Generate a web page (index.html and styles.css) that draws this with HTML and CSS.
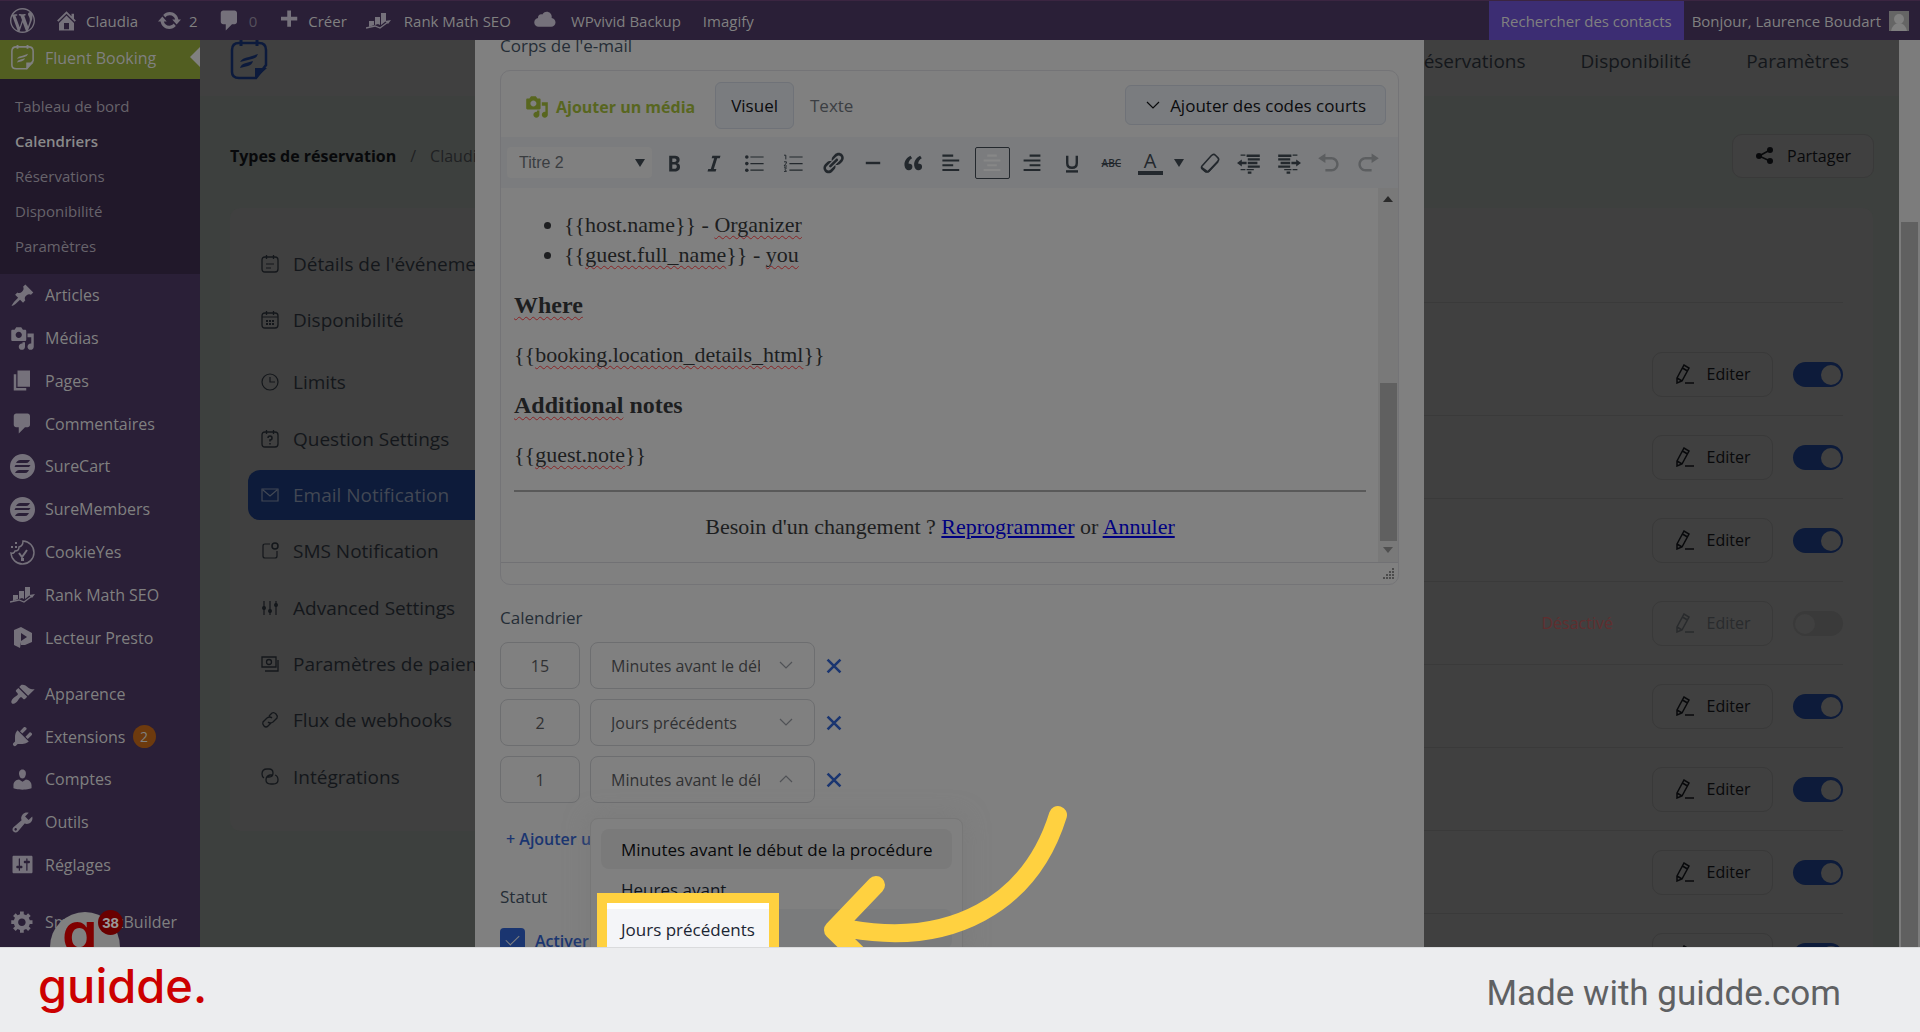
FILE: index.html
```html
<!DOCTYPE html>
<html lang="fr">
<head>
    <meta charset="UTF-8">
    <meta name="viewport" content="width=device-width, initial-scale=1.0">
    <title>Fluent Booking - Calendriers</title>
    <link rel="stylesheet" href="styles.css">
</head>
<body>
    <!-- Shared icons -->
    <svg class="sprite" aria-hidden="true">
        <symbol id="i-media" viewBox="0 0 20 20"><path d="M13 11V4c0-.55-.45-1-1-1h-1.67L9 1H5L3.67 3H2c-.55 0-1 .45-1 1v7c0 .55.45 1 1 1h10c.55 0 1-.45 1-1zM7 4.5c1.38 0 2.5 1.12 2.5 2.5S8.38 9.5 7 9.5 4.5 8.38 4.5 7 5.62 4.5 7 4.5zM14 6h5v10.5c0 1.38-1.12 2.5-2.5 2.5S14 17.88 14 16.5s1.12-2.5 2.5-2.5c.17 0 .34.02.5.05V9h-3V6zm-4 8.05V13h2v3.5c0 1.38-1.12 2.5-2.5 2.5S7 17.88 7 16.5 8.12 14 9.5 14c.17 0 .34.02.5.05z"/></symbol>
        <symbol id="i-comment" viewBox="0 0 20 20"><path d="M5 2h9c1.1 0 2 .9 2 2v7c0 1.1-.9 2-2 2h-2l-5 5v-5H5c-1.1 0-2-.9-2-2V4c0-1.1.9-2 2-2z"/></symbol>
        <symbol id="i-rank" viewBox="0 0 25 25"><path d="M3 13h5v4l-5 2zM9 9h5v8l-2-1-3 1zM15 5h5v8l-5 4z"/><path d="M0 20l9-2 5 2 8-6" fill="none" stroke="currentColor" stroke-width="1.3"/><path d="M19 13l6-1-3 4z"/></symbol>
        <symbol id="i-sure" viewBox="0 0 25 25"><path fill-rule="evenodd" d="M12.5 0a12.5 12.5 0 1 0 0 25a12.5 12.5 0 1 0 0-25zM10 6h10l-1 1.5q-1 1.5-3 1.5H6l1-1.5q1-1.5 3-1.5zM5.5 11h15l-1 1.5q-.5.5-1.5.5H4.5zM9 16h10l-1 1.5q-1 1.5-3 1.5H5l1-1.5q1-1.5 3-1.5z"/></symbol>
        <symbol id="i-booking" viewBox="0 0 38 40"><path d="M36 25V10q0-7-7-7H9q-7 0-7 7v22q0 6 7 6h17z" fill="none" stroke="currentColor" stroke-width="2.5"/><path d="M11 0v6M27 0v6" stroke="currentColor" stroke-width="3"/><path d="M25 39V28h12zM10 22q2-4 9-5l9-3q-1 4-6 5l-8 2zM10 28q1-4 6-5l7-2q-1 4-5 5z"/></symbol>
        <symbol id="i-chevron" viewBox="0 0 16 16"><path d="M2 5l6 6 6-6" fill="none" stroke="currentColor" stroke-width="1.2"/></symbol>
        <symbol id="i-edit" viewBox="0 0 20 20"><path d="M2 14L9 1l5 3-7 13-5 2zM2 14l5 3M7.5 4l5 3M10 19h9" fill="none" stroke="currentColor" stroke-width="1.5"/></symbol>
        <symbol id="i-cal" viewBox="0 0 18 18"><path d="M4 2h10q3 0 3 3v9q0 3-3 3H4q-3 0-3-3V5q0-3 3-3zM5.5 0v4M12.5 0v4" fill="none" stroke="currentColor" stroke-width="1.3"/></symbol>
        <symbol id="i-cross" viewBox="0 0 14 14"><path d="M2 2l10 10M12 2L2 12" stroke="currentColor" stroke-width="2"/></symbol>
        <symbol id="i-caret" viewBox="0 0 10 8"><path d="M0 0h10L5 8z"/></symbol>
    </svg>

    <div class="stage">
        <!-- Admin bar -->
        <header class="adminbar">
            <a href="#" class="bar-item" aria-label="WordPress"><svg class="icon" viewBox="0 0 20 20"><path d="M20 10c0-5.51-4.49-10-10-10C4.48 0 0 4.49 0 10c0 5.52 4.48 10 10 10 5.51 0 10-4.48 10-10zM7.78 15.37L4.37 6.22c.55-.02 1.17-.08 1.17-.08.5-.06.44-1.13-.06-1.11 0 0-1.45.11-2.37.11-.18 0-.37 0-.58-.01C4.12 2.69 6.87 1.11 10 1.11c2.33 0 4.45.87 6.05 2.34-.68-.11-1.65.39-1.65 1.58 0 .74.45 1.36.9 2.1.35.61.55 1.36.55 2.46 0 1.49-1.4 5-1.4 5l-3.03-8.37c.54-.02.82-.17.82-.17.5-.05.44-1.25-.06-1.22 0 0-1.44.12-2.38.12-.87 0-2.33-.12-2.33-.12-.5-.03-.56 1.2-.06 1.22l.92.08 1.26 3.41zM17.41 10c.24-.64.74-1.87.43-4.25.7 1.29 1.05 2.71 1.05 4.25 0 3.29-1.73 6.24-4.4 7.78.97-2.59 1.94-5.2 2.92-7.78zM6.1 18.09C3.12 16.65 1.11 13.53 1.11 10c0-1.3.23-2.48.72-3.59C3.25 10.3 4.67 14.2 6.1 18.09zm4.03-6.63l2.58 6.98c-.86.29-1.76.45-2.71.45-.79 0-1.57-.11-2.29-.33.81-2.38 1.62-4.74 2.42-7.1z"/></svg></a>
            <a href="#" class="bar-item"><svg class="icon" viewBox="0 0 20 20"><path d="M16 8.5l1.53 1.53-1.06 1.06L10 4.6l-6.47 6.49-1.06-1.06L10 2.5l4 4v-2h2v4zm-6-2.46l6 5.99V18H4v-5.97zM12 17v-5H8v5h4z"/></svg>Claudia</a>
            <a href="#" class="bar-item"><svg class="icon" viewBox="0 0 20 20"><path d="M10.2 3.28c3.53 0 6.43 2.61 6.92 6h2.08l-3.5 4-3.5-4h2.32c-.45-1.97-2.21-3.45-4.32-3.45-1.45 0-2.73.71-3.54 1.78L4.95 5.66C6.23 4.2 8.11 3.28 10.2 3.28zm-.4 13.44c-3.52 0-6.43-2.61-6.92-6H.8l3.5-4c1.17 1.33 2.33 2.67 3.5 4H5.48c.45 1.97 2.21 3.45 4.32 3.45 1.45 0 2.73-.71 3.54-1.78l1.71 1.95c-1.28 1.46-3.15 2.38-5.25 2.38z"/></svg>2</a>
            <a href="#" class="bar-item muted"><svg class="icon" viewBox="0 0 20 20"><use href="#i-comment"/></svg>0</a>
            <a href="#" class="bar-item"><svg class="icon" viewBox="0 0 20 20"><path d="M17 7v3h-5v5H9v-5H4V7h5V2h3v5h5z"/></svg>Créer</a>
            <a href="#" class="bar-item wide"><svg class="icon"><use href="#i-rank"/></svg>Rank Math SEO</a>
            <a href="#" class="bar-item wide"><svg class="icon" viewBox="0 1 20 20"><path d="M14.9 9c1.8.2 3.1 1.7 3.1 3.5 0 1.9-1.6 3.5-3.5 3.5h-10C2.6 16 1 14.4 1 12.5 1 10.7 2.3 9.3 4.1 9 4 8.9 4 8.7 4 8.5 4 7.1 5.1 6 6.5 6c.3 0 .7.1.9.2C8.1 4.9 9.4 4 11 4c2.2 0 4 1.8 4 4 0 .4-.1.7-.1 1z"/></svg>WPvivid Backup</a>
            <a href="#" class="bar-item last">Imagify</a>
            <a href="#" class="bar-search">Rechercher des contacts</a>
            <a href="#" class="bar-user">Bonjour, Laurence Boudart
                <svg class="avatar" viewBox="0 0 20 20"><rect width="20" height="20" fill="#656565"/><circle cx="10" cy="8" r="5" fill="#808080"/><path d="M2 20q2-8 8-8t8 8z" fill="#808080"/></svg>
            </a>
        </header>

        <div class="viewport">
            <!-- Side menu -->
            <nav class="sidebar">
                <a href="#" class="menu-item current"><svg class="icon"><use href="#i-booking"/></svg>Fluent Booking</a>
                <div class="submenu">
                    <a href="#">Tableau de bord</a>
                    <a href="#" class="active">Calendriers</a>
                    <a href="#">Réservations</a>
                    <a href="#">Disponibilité</a>
                    <a href="#">Paramètres</a>
                </div>
                <div class="menu-group content-group">
                    <a href="#" class="menu-item"><svg class="icon" viewBox="0 0 20 20"><path d="M10.44 3.02l1.82-1.82 6.36 6.35-1.83 1.82c-1.05-.68-2.48-.57-3.41.36l-.75.75c-.92.93-1.04 2.35-.35 3.41l-1.83 1.82-2.41-2.41-2.8 2.79c-.42.42-3.38 2.71-3.8 2.29s1.86-3.39 2.28-3.81l2.79-2.79L4.1 9.36l1.83-1.82c1.05.69 2.48.57 3.4-.36l.75-.75c.93-.92 1.05-2.35.36-3.41z"/></svg>Articles</a>
                    <a href="#" class="menu-item"><svg class="icon"><use href="#i-media"/></svg>Médias</a>
                    <a href="#" class="menu-item"><svg class="icon" viewBox="0 0 20 20"><path d="M6 15V2h10v13H6zm-1 1h8v2H3V5h2v11z"/></svg>Pages</a>
                    <a href="#" class="menu-item"><svg class="icon"><use href="#i-comment"/></svg>Commentaires</a>
                    <a href="#" class="menu-item"><svg class="icon"><use href="#i-sure"/></svg>SureCart</a>
                    <a href="#" class="menu-item"><svg class="icon"><use href="#i-sure"/></svg>SureMembers</a>
                    <a href="#" class="menu-item"><svg class="icon" viewBox="0 0 25 25"><path d="M13 1a11.5 11.5 0 1 1-12 12q3 1 4-2 4 0 4-4 4-1 4-6z" fill="none" stroke="currentColor" stroke-width="1.5"/><path d="M9 13l3 4 5-7" fill="none" stroke="currentColor" stroke-width="2"/><path d="M5 2h2v2H5zM1 6h2v2H1zM5 6h2v2H5zM11 18h3v3h-3z"/></svg>CookieYes</a>
                    <a href="#" class="menu-item"><svg class="icon"><use href="#i-rank"/></svg>Rank Math SEO</a>
                    <a href="#" class="menu-item"><svg class="icon" viewBox="0 0 25 25"><path fill-rule="evenodd" d="M4 5l7-3 11 6v9l-7 3h-4v-3l-1 6-6-3zM11 8v8l6-4z"/></svg>Lecteur Presto</a>
                </div>
                <div class="menu-group system-group">
                    <a href="#" class="menu-item"><svg class="icon" viewBox="0 0 20 20"><path d="M14.48 11.06L7.41 3.99l1.5-1.5c.5-.56 2.3-.47 3.51.32 1.21.8 1.43 1.28 2.91 2.1 1.18.64 2.45 1.26 4.45.85zm-.71.71L6.7 4.7 4.93 6.47c-.39.39-.39 1.02 0 1.41l1.06 1.06c.39.39.39 1.03 0 1.42-.6.6-1.43 1.11-2.21 1.69-.35.26-.7.53-1.01.84C1.43 14.23.4 16.08 1.4 17.07c.99 1 2.84-.03 4.18-1.36.31-.31.58-.66.85-1.02.57-.78 1.08-1.61 1.69-2.21.39-.39 1.02-.39 1.41 0l1.06 1.06c.39.39 1.02.39 1.41 0z"/></svg>Apparence</a>
                    <a href="#" class="menu-item"><svg class="icon" viewBox="0 0 20 20"><path d="M13.11 4.36L9.87 7.6 8 5.73l3.24-3.24c.35-.34 1.05-.2 1.56.32.52.51.66 1.21.31 1.55zm-8 1.77l.91-1.12 9.01 9.01-1.19.84c-.71.71-2.63 1.16-3.82 1.16H6.14L4.9 17.26c-.59.59-1.54.59-2.12 0-.59-.58-.59-1.53 0-2.12l1.24-1.24v-3.88c0-1.13.4-3.19 1.09-3.89zm7.26 3.97l3.24-3.24c.34-.35 1.04-.21 1.55.31.52.51.66 1.21.31 1.55l-3.24 3.25z"/></svg>Extensions <span class="count">2</span></a>
                    <a href="#" class="menu-item"><svg class="icon" viewBox="0 0 20 20"><path d="M10 9.25c-2.27 0-2.73-3.44-2.73-3.44C7 4.02 7.82 2 9.97 2c2.16 0 2.98 2.02 2.71 3.81 0 0-.41 3.44-2.68 3.44zm0 2.57L12.72 10c2.39 0 4.52 2.33 4.52 4.53v2.49s-3.65 1.13-7.24 1.13c-3.65 0-7.24-1.13-7.24-1.13v-2.49c0-2.25 1.94-4.48 4.47-4.48z"/></svg>Comptes</a>
                    <a href="#" class="menu-item"><svg class="icon" viewBox="0 0 20 20"><path d="M16.68 9.77c-1.34 1.34-3.3 1.67-4.95.99l-5.41 6.52c-.99.99-2.59.99-3.58 0s-.99-2.59 0-3.57l6.52-5.42c-.68-1.65-.35-3.61.99-4.95 1.28-1.28 3.12-1.62 4.72-1.06l-2.89 2.89 2.82 2.82 2.86-2.87c.53 1.58.18 3.39-1.08 4.65zM3.81 16.21c.4.39 1.04.39 1.43 0 .4-.4.4-1.04 0-1.43-.39-.4-1.03-.4-1.43 0-.39.39-.39 1.03 0 1.43z"/></svg>Outils</a>
                    <a href="#" class="menu-item"><svg class="icon" viewBox="0 0 20 20"><path d="M18 16V4c0-.55-.45-1-1-1H3c-.55 0-1 .45-1 1v12c0 .55.45 1 1 1h14c.55 0 1-.45 1-1zM8 11h1c.55 0 1 .45 1 1s-.45 1-1 1H8v1.5c0 .28-.22.5-.5.5s-.5-.22-.5-.5V13H6c-.55 0-1-.45-1-1s.45-1 1-1h1V5.5c0-.28.22-.5.5-.5s.5.22.5.5V11zm5-2h-1c-.55 0-1-.45-1-1s.45-1 1-1h1V5.5c0-.28.22-.5.5-.5s.5.22.5.5V7h1c.55 0 1 .45 1 1s-.45 1-1 1h-1v5.5c0 .28-.22.5-.5.5s-.5-.22-.5-.5V9z"/></svg>Réglages</a>
                </div>
                <a href="#" class="menu-item"><svg class="icon" viewBox="0 0 20 20"><path d="M18 12h-2.18c-.17.7-.44 1.35-.81 1.93l1.54 1.54-2.1 2.1-1.54-1.54c-.58.36-1.23.63-1.91.79V19H8v-2.18c-.68-.16-1.33-.43-1.91-.79l-1.54 1.54-2.12-2.12 1.54-1.54c-.36-.58-.63-1.23-.79-1.91H1V9.03h2.17c.16-.7.44-1.35.8-1.94L2.43 5.55l2.1-2.1 1.54 1.54c.58-.37 1.24-.64 1.93-.81V2h3v2.18c.68.16 1.33.43 1.91.79l1.54-1.54 2.12 2.12-1.54 1.54c.36.59.64 1.24.8 1.94H18V12zm-8.5 1.5c1.66 0 3-1.34 3-3s-1.34-3-3-3-3 1.34-3 3 1.34 3 3 3z"/></svg>SmartQuizBuilder</a>
            </nav>

            <!-- Page behind the dialog -->
            <main class="page">
                <div class="page-header">
                    <svg class="logo"><use href="#i-booking"/></svg>
                    <nav class="top-nav">
                        <a href="#">Réservations</a>
                        <a href="#">Disponibilité</a>
                        <a href="#">Paramètres</a>
                    </nav>
                </div>
                <div class="crumb-row">
                    <p class="crumbs"><b>Types de réservation</b><span>/</span><a href="#">Claudia</a></p>
                    <button type="button" class="outline-btn share"><svg class="btn-icon" viewBox="0 0 20 20"><circle cx="4" cy="10" r="3"/><circle cx="15" cy="4" r="3"/><circle cx="15" cy="15" r="3"/><path d="M15 4L4 10l11 5" fill="none" stroke="currentColor" stroke-width="1.5"/></svg>Partager</button>
                </div>
                <div class="columns">
                    <nav class="settings-nav">
                        <div class="nav-group">
                            <a href="#"><svg class="nav-icon" viewBox="0 0 18 18"><use href="#i-cal"/><path d="M5 9h8M5 13h5" stroke="currentColor"/></svg>Détails de l'événement</a>
                            <a href="#"><svg class="nav-icon" viewBox="0 0 18 18"><use href="#i-cal"/><path d="M1 6h16" stroke="currentColor"/><path d="M5 10h8M5 13h8" stroke="currentColor" stroke-width="2" stroke-dasharray="2 1"/></svg>Disponibilité</a>
                        </div>
                        <div class="nav-group long">
                            <a href="#"><svg class="nav-icon" viewBox="0 0 18 18"><path d="M9 1a8 8 0 1 0 0 16A8 8 0 1 0 9 1zM9 4v5h5" fill="none" stroke="currentColor" stroke-width="1.2"/></svg>Limits</a>
                            <a href="#"><svg class="nav-icon" viewBox="0 0 18 18"><use href="#i-cal"/><path d="M7 8q0-2 2-2t2 2-2 2v1.5M9 13v1.5" fill="none" stroke="currentColor" stroke-width="1.5"/></svg>Question Settings</a>
                            <a href="#" class="active"><svg class="nav-icon" viewBox="0 0 18 18"><path d="M1 3h16v12H1zM2 4l7 6 7-6" fill="none" stroke="currentColor" stroke-width="1.2"/></svg>Email Notification</a>
                            <a href="#"><svg class="nav-icon" viewBox="0 0 18 18"><path d="M9 2H4Q2 2 2 4v10q0 2 2 2h10q2 0 2-2V9" fill="none" stroke="currentColor" stroke-width="1.2"/><circle cx="14" cy="4" r="3" fill="none" stroke="currentColor" stroke-width="1.5"/></svg>SMS Notification</a>
                            <a href="#"><svg class="nav-icon" viewBox="0 0 18 18"><path d="M3 2v14M9 2v14M15 2v14" stroke="currentColor" stroke-width="1.2"/><circle cx="3" cy="9" r="2"/><circle cx="9" cy="12" r="2"/><circle cx="15" cy="6" r="2"/></svg>Advanced Settings</a>
                            <a href="#"><svg class="nav-icon" viewBox="0 0 18 18"><path d="M1 2h14v10H1zM17 5v11H4" fill="none" stroke="currentColor" stroke-width="1.3"/><circle cx="8" cy="7" r="2.5" fill="none" stroke="currentColor" stroke-width="1.3"/></svg>Paramètres de paiement</a>
                            <a href="#"><svg class="nav-icon" viewBox="0 0 18 18"><path d="M8 5l3-3q2-1 4 1t1 4l-4 4q-3 2-5 0M10 12l-3 3q-2 2-4 0t-1-4l4-4q3-2 5 0" fill="none" stroke="currentColor" stroke-width="1.3"/></svg>Flux de webhooks</a>
                            <a href="#"><svg class="nav-icon" viewBox="0 0 18 18"><path d="M3 10Q1 9 1 6q0-5 5-5h2q4 0 4 4t-4 4H6M14 7q3 1 3 5 0 4-5 4h-2q-5 0-5-4t4-5h3" fill="none" stroke="currentColor" stroke-width="1.3"/></svg>Intégrations</a>
                        </div>
                    </nav>
                    <section class="notifications">
                        <div class="notif-head"></div>
                        <div class="notif-row"><button type="button" class="outline-btn"><svg class="btn-icon"><use href="#i-edit"/></svg>Editer</button><input type="checkbox" class="switch" aria-label="Notification 1" checked></div>
                        <div class="notif-row"><button type="button" class="outline-btn"><svg class="btn-icon"><use href="#i-edit"/></svg>Editer</button><input type="checkbox" class="switch" aria-label="Notification 2" checked></div>
                        <div class="notif-row"><button type="button" class="outline-btn"><svg class="btn-icon"><use href="#i-edit"/></svg>Editer</button><input type="checkbox" class="switch" aria-label="Notification 3" checked></div>
                        <div class="notif-row off"><span class="state">Désactivé</span><button type="button" class="outline-btn"><svg class="btn-icon"><use href="#i-edit"/></svg>Editer</button><input type="checkbox" class="switch" aria-label="Notification 4"></div>
                        <div class="notif-row"><button type="button" class="outline-btn"><svg class="btn-icon"><use href="#i-edit"/></svg>Editer</button><input type="checkbox" class="switch" aria-label="Notification 5" checked></div>
                        <div class="notif-row"><button type="button" class="outline-btn"><svg class="btn-icon"><use href="#i-edit"/></svg>Editer</button><input type="checkbox" class="switch" aria-label="Notification 6" checked></div>
                        <div class="notif-row"><button type="button" class="outline-btn"><svg class="btn-icon"><use href="#i-edit"/></svg>Editer</button><input type="checkbox" class="switch" aria-label="Notification 7" checked></div>
                        <div class="notif-row"><button type="button" class="outline-btn"><svg class="btn-icon"><use href="#i-edit"/></svg>Editer</button><input type="checkbox" class="switch" aria-label="Notification 8" checked></div>
                    </section>
                </div>
            </main>
            <div class="page-scroll"><div class="page-thumb"></div></div>

            <!-- Dialog -->
            <div class="dialog">
                <div class="dialog-body">
                    <h2 class="field-title">Corps de l'e-mail</h2>
                    <div class="editor">
                        <div class="editor-top">
                            <button type="button" class="add-media"><svg class="media-icon"><use href="#i-media"/></svg>Ajouter un média</button>
                            <button type="button" class="tab selected">Visuel</button>
                            <button type="button" class="tab">Texte</button>
                            <button type="button" class="shortcodes"><svg class="chevron"><use href="#i-chevron"/></svg>Ajouter des codes courts</button>
                        </div>
                        <div class="toolbar">
                            <div class="format-box"><select class="format" aria-label="Format"><option>Titre 2</option></select><svg class="caret-icon"><use href="#i-caret"/></svg></div>
                            <button type="button" class="tool" aria-label="Gras"><svg class="tool-icon" viewBox="0 0 20 20"><path d="M6 4v13h4.54c1.37 0 2.46-.33 3.26-1 .8-.66 1.2-1.58 1.2-2.77 0-.84-.17-1.51-.51-2.01s-.9-.85-1.67-1.03v-.09c.57-.1 1.02-.4 1.36-.9s.51-1.13.51-1.91c0-1.14-.39-1.98-1.17-2.5C12.75 4.26 11.5 4 9.78 4H6zm2.57 5.15V6.26h1.36c.73 0 1.27.11 1.61.32.34.22.51.58.51 1.07 0 .54-.16.92-.47 1.15s-.82.35-1.51.35h-1.5zm0 2.19h1.6c1.44 0 2.16.53 2.16 1.61 0 .6-.17 1.05-.51 1.34s-.86.43-1.57.43H8.57v-3.38z"/></svg></button>
                            <button type="button" class="tool" aria-label="Italique"><svg class="tool-icon" viewBox="0 0 20 20"><path d="M14.78 6h-2.13l-2.8 9h2.12l-.62 2H4.6l.62-2h2.14l2.8-9H8.03l.62-2h6.75z"/></svg></button>
                            <button type="button" class="tool" aria-label="Liste à puces"><svg class="tool-icon" viewBox="0 0 20 20"><circle cx="4" cy="5" r="1.5"/><circle cx="4" cy="10.5" r="1.5"/><circle cx="4" cy="16" r="1.5"/><path d="M7 5h11M7 10.5h11M7 16h11" stroke="currentColor"/></svg></button>
                            <button type="button" class="tool" aria-label="Liste numérotée"><svg class="tool-icon" viewBox="0 0 20 20"><path d="M2.5 3.5H4V7M2.5 9h2v1l-2 2.5h2.5M2.5 14h2l-1 1.5 1 1.5H2.5" fill="none" stroke="currentColor" stroke-width=".8"/><path d="M7 5h11M7 10.5h11M7 16h11" stroke="currentColor"/></svg></button>
                            <button type="button" class="tool" aria-label="Lien"><svg class="tool-icon" viewBox="0 0 20 20"><path d="M17.74 2.76c1.68 1.69 1.68 4.41 0 6.1l-1.53 1.52c-1.12 1.12-2.7 1.47-4.14 1.09l2.62-2.61.76-.77.76-.76c.84-.84.84-2.2 0-3.04-.84-.85-2.2-.85-3.04 0l-.77.76-3.38 3.38c-.37-1.44-.02-3.02 1.1-4.14l1.52-1.53c1.69-1.68 4.42-1.68 6.1 0zM8.59 13.43l5.34-5.34c.42-.42.42-1.1 0-1.52-.44-.43-1.13-.39-1.53 0l-5.33 5.34c-.42.42-.42 1.1 0 1.52.44.43 1.13.39 1.52 0zm-.76 2.29l4.14-4.15c.38 1.44.03 3.02-1.09 4.14l-1.52 1.53c-1.69 1.68-4.41 1.68-6.1 0-1.68-1.68-1.68-4.42 0-6.1l1.53-1.52c1.12-1.12 2.7-1.47 4.14-1.1l-4.14 4.15c-.85.84-.85 2.2 0 3.05.84.84 2.2.84 3.04 0z"/></svg></button>
                            <button type="button" class="tool" aria-label="Ligne horizontale"><svg class="tool-icon" viewBox="0 0 20 20"><path d="M4 9h12v2H4z"/></svg></button>
                            <button type="button" class="tool" aria-label="Citation"><svg class="tool-icon" viewBox="0 0 20 20"><path d="M9.49 13.22c0-.74-.2-1.38-.61-1.9-.62-.78-1.83-.88-2.53-.72-.29-1.65 1.11-3.75 2.92-4.65L7.88 4c-2.73 1.3-5.42 4.28-4.96 8.05C3.21 14.43 4.59 16 6.54 16c.85 0 1.56-.25 2.12-.75s.83-1.18.83-2.03zm8.05 0c0-.74-.2-1.38-.61-1.9-.63-.78-1.83-.88-2.53-.72-.29-1.65 1.11-3.75 2.92-4.65L15.93 4c-2.73 1.3-5.41 4.28-4.95 8.05.29 2.38 1.66 3.95 3.61 3.95.85 0 1.56-.25 2.12-.75s.83-1.18.83-2.03z"/></svg></button>
                            <button type="button" class="tool" aria-label="Aligner à gauche"><svg class="tool-icon" viewBox="0 0 20 20"><path d="M2 3h9v1.7H2zM2 7h14v1.7H2zM2 11h9v1.7H2zM2 15h14v1.7H2z"/></svg></button>
                            <button type="button" class="tool pressed" aria-label="Centrer"><svg class="tool-icon" viewBox="0 0 20 20"><path d="M6 3h8v1.7H6zM3 7h14v1.7H3zM6 11h8v1.7H6zM3 15h14v1.7H3z"/></svg></button>
                            <button type="button" class="tool" aria-label="Aligner à droite"><svg class="tool-icon" viewBox="0 0 20 20"><path d="M8 3h9v1.7H8zM3 7h14v1.7H3zM8 11h9v1.7H8zM3 15h14v1.7H3z"/></svg></button>
                            <button type="button" class="tool" aria-label="Souligner"><svg class="tool-icon" viewBox="0 0 20 20"><path d="M6 4v6q0 4 4 4t4-4V4" fill="none" stroke="currentColor" stroke-width="2"/><path d="M5 16h10v2H5z"/></svg></button>
                            <button type="button" class="tool strike" aria-label="Barrer">ABC</button>
                            <button type="button" class="tool text-color" aria-label="Couleur du texte">A</button>
                            <button type="button" class="tool caret" aria-label="Choisir une couleur"><svg class="caret-icon"><use href="#i-caret"/></svg></button>
                            <button type="button" class="tool" aria-label="Supprimer la mise en forme"><svg class="tool-icon" viewBox="0 0 20 20"><path d="M3 13l8-9q2-2 3.5-.5l2 2q1.5 1.5 0 3L9 17q-1.5 1-3 0l-2.5-2q-1-1-.5-2z" fill="none" stroke="currentColor" stroke-width="1.3"/><path d="M3 13l5 3.500 9-9v2L9 18H6l-3-3z"/></svg></button>
                            <button type="button" class="tool" aria-label="Diminuer le retrait"><svg class="tool-icon" viewBox="0 0 20 20"><path d="M8 3h11v2H8zM9 6h10v2H9zM9 9h8v2H9zM9 12h10v2H9zM8 15h6v1H8zM9 17h3v2H9zM3 3h4v1H3zM3 15h4v1H3zM0 10l4-3v2h4v2H4v2z"/></svg></button>
                            <button type="button" class="tool" aria-label="Augmenter le retrait"><svg class="tool-icon" viewBox="0 0 20 20"><path d="M1 3h11v2H1zM1 6h10v2H1zM3 9h8v2H3zM1 12h10v2H1zM6 15h6v1H6zM8 17h3v2H8zM13 3h4v1h-4zM13 15h4v1h-4zM20 10l-4-3v2h-4v2h4v2z"/></svg></button>
                            <button type="button" class="tool disabled" aria-label="Annuler"><svg class="tool-icon" viewBox="0 0 20 20"><path d="M12 5H7V2L1 6l6 4V7h5c2.2 0 4 1.8 4 4s-1.8 4-4 4H7v2h5c3.3 0 6-2.7 6-6s-2.7-6-6-6z"/></svg></button>
                            <button type="button" class="tool disabled" aria-label="Rétablir"><svg class="tool-icon" viewBox="0 0 20 20"><path d="M8 5h5V2l6 4-6 4V7H8c-2.2 0-4 1.8-4 4s1.8 4 4 4h5v2H8c-3.3 0-6-2.7-6-6s2.7-6 6-6z"/></svg></button>
                        </div>
                        <div class="editor-area">
                            <div class="mail">
                                <ul>
                                    <li>{{host.name}} - <span class="typo">Organizer</span></li>
                                    <li>{{<span class="typo">guest.full_name</span>}} - <span class="typo">you</span></li>
                                </ul>
                                <p class="heading"><b class="typo">Where</b></p>
                                <p>{{<span class="typo">booking.location_details_html</span>}}</p>
                                <p class="heading"><b><span class="typo">Additional</span> notes</b></p>
                                <p>{{<span class="typo">guest.note</span>}}</p>
                                <hr>
                                <p class="change">Besoin d'un changement ? <a href="#">Reprogrammer</a> or <a href="#">Annuler</a></p>
                            </div>
                            <div class="editor-scroll">
                                <svg class="arrow-up" viewBox="0 0 10 6"><path d="M0 6l5-6 5 6z"/></svg>
                                <div class="editor-thumb"></div>
                                <svg class="arrow-down" viewBox="0 0 10 6"><path d="M0 0l5 6 5-6z"/></svg>
                            </div>
                        </div>
                        <div class="statusbar">
                            <svg class="grip" viewBox="0 0 12 12"><path d="M9 1h3M6 4h6M3 7h9M0 10h12" stroke="currentColor" stroke-width="2" stroke-dasharray="2 1"/></svg>
                        </div>
                    </div>

                    <h2 class="field-title calendar">Calendrier</h2>
                    <div class="reminders">
                        <div class="reminder">
                            <input type="text" class="amount" value="15" aria-label="Délai 1">
                            <div class="unit-box"><select class="unit" aria-label="Unité 1"><option>Minutes avant le début de la procédure</option></select><svg class="chevron"><use href="#i-chevron"/></svg></div>
                            <button type="button" class="remove" aria-label="Supprimer"><svg class="cross"><use href="#i-cross"/></svg></button>
                        </div>
                        <div class="reminder">
                            <input type="text" class="amount" value="2" aria-label="Délai 2">
                            <div class="unit-box"><select class="unit" aria-label="Unité 2"><option>Jours précédents</option></select><svg class="chevron"><use href="#i-chevron"/></svg></div>
                            <button type="button" class="remove" aria-label="Supprimer"><svg class="cross"><use href="#i-cross"/></svg></button>
                        </div>
                        <div class="reminder">
                            <input type="text" class="amount" value="1" aria-label="Délai 3">
                            <div class="unit-box open">
                                <select class="unit" aria-label="Unité 3"><option>Minutes avant le début de la procédure</option></select><svg class="chevron"><use href="#i-chevron"/></svg>
                                <div class="unit-menu">
                                    <button type="button" class="option chosen">Minutes avant le début de la procédure</button>
                                    <button type="button" class="option">Heures avant</button>
                                    <button type="button" class="option hovered"><span>Jours précédents</span></button>
                                    <svg class="pointer" viewBox="815 800 260 160"><path d="M1062 816C1034 906 954 948 854 930M880 886L837 931L880 973" fill="none" stroke="#ffd140" stroke-width="18" stroke-linecap="round" stroke-linejoin="round"/></svg>
                                </div>
                            </div>
                            <button type="button" class="remove" aria-label="Supprimer"><svg class="cross"><use href="#i-cross"/></svg></button>
                        </div>
                    </div>
                    <button type="button" class="add-more">+ Ajouter un autre</button>
                    <h2 class="field-title">Statut</h2>
                    <label class="enable"><input type="checkbox" checked>Activer</label>
                </div>
            </div>

            <!-- Recorder bubble -->
            <div class="bubble"><span class="bubble-letter">g</span><span class="bubble-count">38</span></div>
        </div>
    </div>

    <footer class="footer">
        <span class="brand">guidde.</span>
        <span class="made">Made with guidde.com</span>
    </footer>
</body>
</html>
```
FILE: styles.css
```css
* {
    box-sizing: border-box;
}
body {
    margin: 0;
    height: 100vh;
    display: flex;
    flex-direction: column;
    overflow: hidden;
    font-family: "Open Sans", "Noto Sans", sans-serif;
    font-size: 16px;
    background-color: #3d403e;
}
a {
    color: inherit;
    text-decoration: none;
}
button, input, select {
    font: inherit;
    color: inherit;
    margin: 0;
    padding: 0;
    border: none;
    background: none;
}
button {
    cursor: pointer;
}
svg {
    display: block;
    flex: none;
    fill: currentColor;
}
.sprite {
    position: absolute;
    width: 0;
    height: 0;
}
.icon {
    width: 25px;
    height: 25px;
    color: #75717b;
}
.stage {
    flex: 1;
    min-height: 0;
    display: flex;
    flex-direction: column;
    overflow: hidden;
}

/* Admin bar */
.adminbar {
    height: 40px;
    flex: none;
    display: flex;
    align-items: center;
    padding: 0 11px 0 10px;
    background-color: #2a1f37;
    border-top: 1px solid #3b2541;
    color: #808080;
    font-size: 15px;
    white-space: nowrap;
}
.bar-item {
    display: flex;
    align-items: center;
    gap: 7px;
    margin-right: 19px;
}
.bar-item.muted {
    color: #55505c;
}
.bar-item.wide {
    gap: 13px;
    margin-right: 22px;
}
.bar-item.last {
    margin-right: auto;
}
.bar-search {
    padding: 0 12px;
    margin-right: 8px;
    line-height: 40px;
    background-color: #3c2d73;
}
.bar-user {
    display: flex;
    align-items: center;
    gap: 8px;
}
.avatar {
    width: 20px;
    height: 20px;
}

/* Side menu */
.viewport {
    flex: 1;
    min-height: 0;
    position: relative;
    display: flex;
}
.sidebar {
    width: 200px;
    flex: none;
    background-color: #2a1f37;
    color: #808080;
}
.menu-item {
    display: flex;
    align-items: center;
    gap: 10px;
    height: 43px;
    padding: 0 10px;
    white-space: nowrap;
}
.menu-item.current {
    height: 39px;
    padding-bottom: 4px;
    background-color: #525e21;
    position: relative;
}
.menu-item.current .icon {
    color: #808080;
}
.menu-item.current::after {
    content: "";
    position: absolute;
    right: 0;
    top: 7px;
    border: 10px solid transparent;
    border-left: none;
    border-right-color: #808080;
}
.submenu {
    padding: 10px 15px;
    background-color: #21182a;
    color: #67636b;
    font-size: 15px;
}
.submenu a {
    display: block;
    line-height: 35px;
}
.submenu .active {
    color: #8a8a8a;
    font-weight: 600;
}
.menu-group {
    display: grid;
    grid-auto-rows: 1fr;
    margin-bottom: 14px;
}
.menu-group .menu-item {
    height: auto;
}
.content-group {
    height: 385px;
}
.system-group {
    height: 213px;
}
.count {
    width: 23px;
    border-radius: 50%;
    background-color: #6d3a0e;
    font-size: 14px;
    line-height: 23px;
    text-align: center;
    margin-left: -3px;
}

/* Page */
.page {
    flex: 1;
    min-width: 0;
    overflow: hidden;
    color: #14171b;
}
.page-header {
    display: flex;
    justify-content: space-between;
    height: 56px;
    padding: 0 50px 0 30px;
    background-color: #404040;
}
.logo {
    width: 38px;
    height: 40px;
    color: #0c1a3c;
}
.top-nav {
    display: flex;
    gap: 55px;
    font-size: 19px;
    font-weight: 500;
    line-height: 42px;
}
.crumb-row {
    display: flex;
    justify-content: space-between;
    align-items: center;
    padding: 38px 25px 30px 30px;
}
.crumbs {
    margin: 0;
    display: flex;
    gap: 14px;
    color: #1f2123;
}
.crumbs b {
    color: #08090b;
}
.outline-btn {
    display: flex;
    align-items: center;
    justify-content: center;
    gap: 12px;
    width: 121px;
    height: 45px;
    border: 1px solid #393939;
    border-radius: 10px;
    color: #08090b;
    font-weight: 500;
}
.outline-btn.share {
    width: 142px;
    height: 44px;
    background-color: #404040;
}
.btn-icon {
    width: 20px;
    height: 20px;
}
.columns {
    display: flex;
    align-items: flex-start;
    margin: 0 26px 0 30px;
}
.settings-nav {
    width: 300px;
    flex: none;
    padding: 31px 0 29px 18px;
    background-color: #404040;
    border-radius: 10px 0 0 10px;
    font-size: 19px;
}
.nav-group {
    display: grid;
    grid-auto-rows: 50px;
    gap: 6px;
}
.nav-group.long {
    grid-auto-rows: 1fr;
    height: 445px;
    margin-top: 12px;
}
.settings-nav a {
    display: flex;
    align-items: center;
    gap: 14px;
    padding-left: 13px;
    border-radius: 12px;
    white-space: nowrap;
}
.settings-nav .active {
    background-color: #0d1b3a;
    color: #424854;
}
.nav-icon {
    width: 18px;
    height: 18px;
}
.notifications {
    flex: 1;
    padding: 0 30px;
    background-color: #404040;
    border-radius: 0 10px 0 0;
}
.notif-head {
    height: 95px;
    margin-bottom: 30px;
    border-bottom: 1px solid #3a3a3a;
}
.notif-row {
    display: flex;
    justify-content: flex-end;
    align-items: center;
    gap: 20px;
    height: 83px;
    border-bottom: 1px solid #3a3a3a;
}
.state {
    margin-right: 19px;
    color: #602e2f;
}
.notif-row.off .outline-btn {
    color: #292b2d;
}
.switch {
    appearance: none;
    display: flex;
    width: 50px;
    height: 25px;
    padding: 3px 2px;
    border-radius: 13px;
    background-color: #3a3a3a;
}
.switch::before {
    content: "";
    width: 20px;
    height: 20px;
    border-radius: 50%;
    background-color: #404040;
}
.switch:checked {
    justify-content: flex-end;
    background-color: #0d1b3a;
}
.page-scroll {
    width: 21px;
    flex: none;
    padding: 182px 2px 0;
    background-color: #7c7c7c;
}
.page-thumb {
    height: 100%;
    background-color: #606060;
}

/* Dialog */
.dialog {
    position: absolute;
    left: 475px;
    right: 496px;
    top: 0;
    bottom: 0;
    overflow: hidden;
    background-color: #808080;
}
.dialog-body {
    margin-top: -6px;
    padding: 0 25px;
}
.field-title {
    margin: 0;
    font-size: 17px;
    font-weight: 500;
    line-height: 24px;
    color: #252d36;
}
.editor {
    margin-top: 12px;
    border: 1px solid #747477;
    border-radius: 10px;
}
.editor-top {
    display: flex;
    align-items: center;
    height: 66px;
    padding: 2px 12px 0 24px;
}
.add-media {
    display: flex;
    align-items: center;
    gap: 7px;
    margin: 4px 20px 0 0;
    color: #58661f;
    font-weight: 700;
}
.media-icon {
    width: 24px;
    height: 24px;
}
.tab {
    height: 47px;
    padding: 0 15px;
    border: 1px solid transparent;
    border-radius: 6px;
    color: #3b3e43;
    font-size: 17px;
    font-weight: 500;
}
.tab.selected {
    border-color: #6f7278;
    background-color: #7a7c7f;
    color: #0a0b0d;
}
.shortcodes {
    display: flex;
    align-items: center;
    gap: 9px;
    height: 40px;
    margin-left: auto;
    padding: 0 19px;
    border: 1px solid #6f7278;
    border-radius: 6px;
    background-color: #7a7c7f;
    color: #0a0b0d;
    font-size: 17px;
    font-weight: 500;
}
.chevron {
    width: 16px;
    height: 16px;
}
.toolbar {
    display: flex;
    align-items: center;
    justify-content: space-between;
    height: 51px;
    padding: 0 12px 0 6px;
    background-color: #7b7c7e;
    color: #23282d;
}
.format-box {
    position: relative;
    width: 145px;
}
.format-box .caret-icon {
    position: absolute;
    right: 7px;
    top: 12px;
    pointer-events: none;
}
.format {
    appearance: none;
    display: block;
    width: 100%;
    height: 31px;
    padding: 0 12px;
    border-radius: 4px;
    background-color: #808080;
    color: #3a3d40;
    font-family: "Liberation Sans", sans-serif;
}
.tool {
    display: flex;
    align-items: center;
    justify-content: center;
    width: 35px;
    height: 32px;
    flex: none;
}
.tool-icon {
    width: 24px;
    height: 24px;
}
.tool.pressed {
    border: 1px solid #23282d;
    border-radius: 2px;
    color: #878787;
}
.tool.disabled {
    color: #5c5e60;
}
.strike {
    font-size: 10px;
    font-weight: 600;
    text-decoration: line-through;
}
.text-color {
    width: 25px;
    height: 24px;
    margin: 0 4px;
    border-bottom: 4px solid #23282d;
    font-size: 20px;
    line-height: 20px;
}
.caret {
    width: 16px;
}
.caret-icon {
    width: 10px;
    height: 8px;
}
.editor-area {
    display: flex;
    height: 374px;
}
.mail {
    flex: 1;
    padding: 22px 12px 0 13px;
    color: #1d1e20;
    font-family: "Liberation Serif", serif;
    font-size: 22px;
    line-height: 30px;
}
.mail ul {
    margin: 0;
    padding-left: 50px;
}
.mail p {
    margin: 20px 0;
}
.mail .heading {
    font-size: 24px;
}
.mail hr {
    margin: 19px 0 0;
    border: none;
    border-top: 2px solid #595959;
}
.mail .change {
    margin: 20px 0 0;
    text-align: center;
}
.mail .change a {
    color: #000080;
    text-decoration: underline;
}
.typo {
    text-decoration: underline wavy #8a2426 1px;
    text-decoration-skip-ink: none;
    text-underline-offset: 3px;
}
.editor-scroll {
    display: flex;
    flex-direction: column;
    align-items: center;
    width: 20px;
    padding: 8px 0 9px;
    background-color: #797979;
}
.editor-scroll svg {
    width: 10px;
    height: 6px;
}
.arrow-up {
    color: #2a2a2a;
}
.arrow-down {
    color: #505050;
}
.editor-thumb {
    width: 17px;
    height: 158px;
    margin: auto 0 6px;
    background-color: #606060;
}
.statusbar {
    display: flex;
    justify-content: flex-end;
    align-items: center;
    height: 22px;
    padding: 0 3px;
    border-top: 1px solid #717174;
    color: #4c4c4c;
}
.grip {
    width: 12px;
    height: 12px;
}
.calendar {
    margin: 21px 0 12px;
}
.reminders {
    display: grid;
    gap: 10px;
}
.reminder {
    display: flex;
    align-items: center;
    gap: 10px;
    color: #303133;
}
.amount {
    width: 80px;
    height: 47px;
    border: 1px solid #6d6e70;
    border-radius: 8px;
    text-align: center;
}
.unit-box {
    position: relative;
    width: 225px;
}
.unit {
    appearance: none;
    display: block;
    width: 100%;
    height: 47px;
    padding: 0 54px 0 20px;
    border: 1px solid #6d6e70;
    border-radius: 8px;
}
.unit-box .chevron {
    position: absolute;
    right: 21px;
    top: 15px;
    color: #505256;
    pointer-events: none;
}
.unit-box.open .chevron {
    transform: rotate(180deg);
}
.remove {
    color: #1a3570;
}
.cross {
    width: 18px;
    height: 18px;
}
.unit-menu {
    position: absolute;
    left: 0;
    top: calc(100% + 15px);
    width: 373px;
    padding: 10px;
    border: 1px solid #777777;
    border-radius: 8px;
    background-color: #808080;
    box-shadow: 0 0 24px #77777799;
}
.option {
    display: block;
    width: 100%;
    height: 40px;
    padding: 0 0 0 20px;
    border-radius: 8px;
    color: #10151c;
    font-size: 17px;
    font-weight: 500;
    text-align: left;
    white-space: nowrap;
}
.option.chosen {
    background-color: #7a7a7a;
    color: #08090b;
}
.option.hovered {
    position: relative;
    background-color: #7a7b7c;
    color: #1b2533;
}
.option.hovered::before {
    content: "";
    box-sizing: border-box;
    position: absolute;
    left: -4px;
    top: -16px;
    width: 182px;
    height: 80px;
    border: 10px solid #ffd140;
    background: linear-gradient(#ffffff 6px, #f4f5f8 6px);
}
.option.hovered span {
    position: relative;
}
.pointer {
    position: absolute;
    left: 220px;
    top: -20px;
    width: 260px;
    height: 160px;
    overflow: visible;
}
.add-more {
    display: block;
    margin: 24px 0 34px 6px;
    color: #1a3570;
    font-weight: 600;
    line-height: 24px;
}
.enable {
    display: flex;
    align-items: center;
    gap: 10px;
    margin-top: 19px;
    color: #1a3570;
    font-weight: 600;
}
.enable input {
    appearance: none;
    display: flex;
    justify-content: center;
    width: 25px;
    height: 25px;
    border-radius: 4px;
    background-color: #1a3570;
}
.enable input::before {
    content: "";
    width: 6px;
    height: 12px;
    margin-top: 4px;
    border: solid #808080;
    border-width: 0 1px 1px 0;
    transform: rotate(45deg);
}

/* Recorder bubble */
.bubble {
    position: absolute;
    left: 50px;
    bottom: -35px;
    width: 70px;
    height: 70px;
    border-radius: 50%;
    background-color: #808080;
}
.bubble-letter {
    position: absolute;
    left: 12px;
    top: -19px;
    color: #800000;
    font-family: Inter, sans-serif;
    font-size: 57px;
    font-weight: 600;
    line-height: 80px;
}
.bubble-count {
    position: absolute;
    right: -3px;
    top: -2px;
    width: 25px;
    border-radius: 50%;
    background-color: #690000;
    color: #999999;
    font-family: "Liberation Sans", sans-serif;
    font-size: 15px;
    font-weight: 700;
    line-height: 25px;
    text-align: center;
}

/* Footer */
.footer {
    height: 85px;
    flex: none;
    display: flex;
    justify-content: space-between;
    align-items: center;
    padding: 0 79px 0 38px;
    border-top: 1px solid #dadbdd;
    background-color: #ecedef;
    position: relative;
}
.brand {
    padding-bottom: 8px;
    color: #cc0000;
    font-family: Inter, sans-serif;
    font-size: 47px;
    font-weight: 500;
    line-height: 60px;
}
.made {
    padding-top: 6px;
    color: #5f6163;
    font-family: Roboto, sans-serif;
    font-size: 35px;
}
```
